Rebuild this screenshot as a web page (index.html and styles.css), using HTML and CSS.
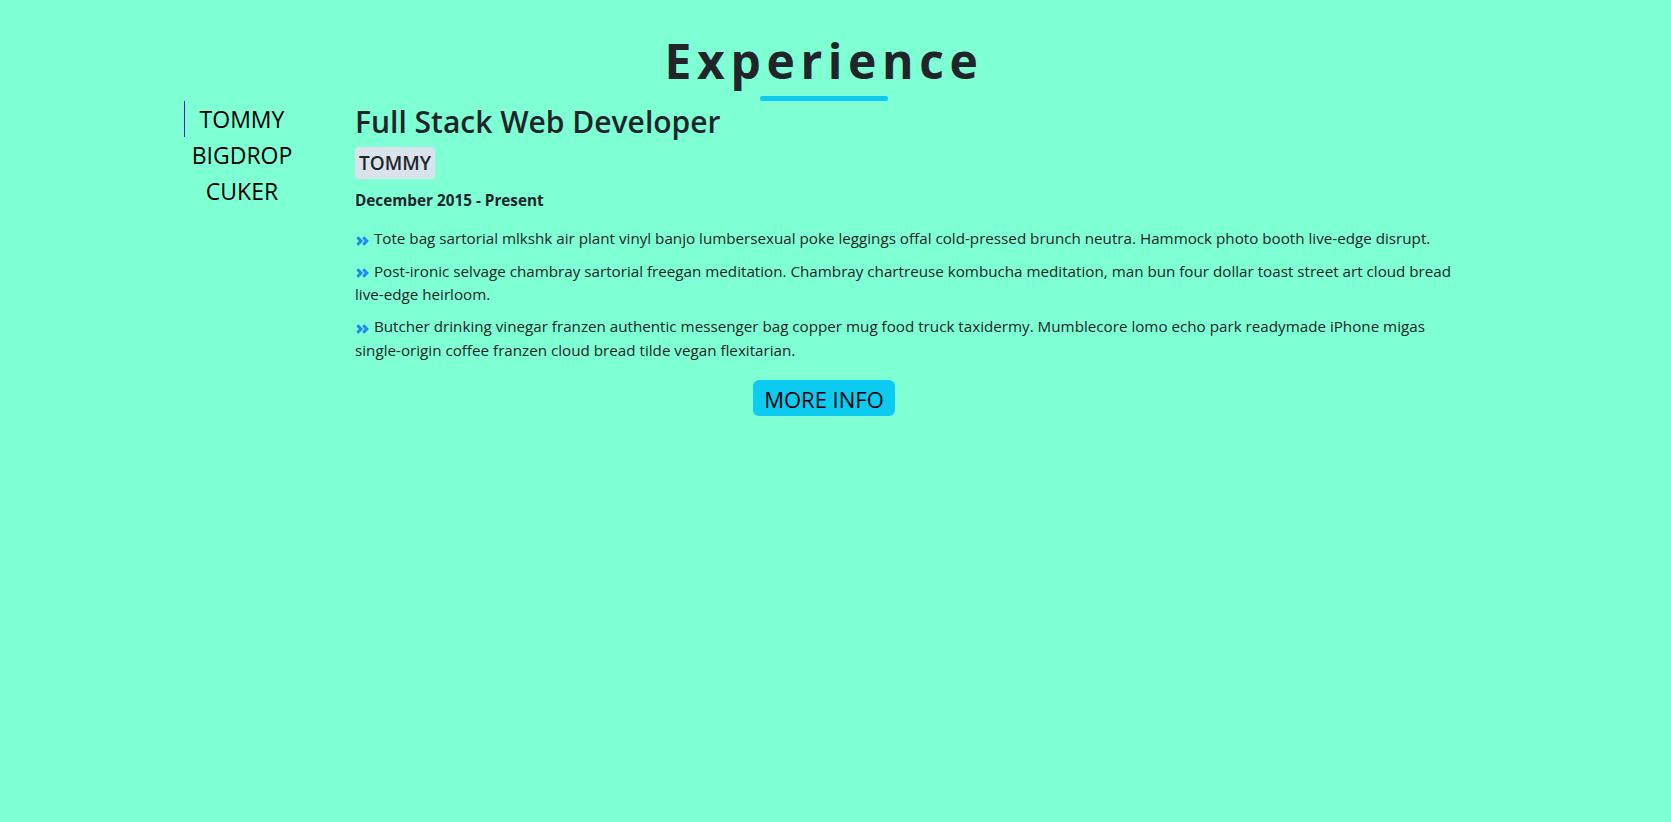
FILE: index.html
```html
<!DOCTYPE html>
<html lang="en">
<head>
<meta charset="utf-8">
<title>Experience</title>
<link rel="stylesheet" href="styles.css">
</head>
<body>
<div class="page">
  <section class="experience">
    <h2 class="title">Experience</h2>
    <div class="underline"></div>
    <div class="tabs">
      <ul class="tab-list">
        <li class="tab active">TOMMY</li>
        <li class="tab">BIGDROP</li>
        <li class="tab">CUKER</li>
      </ul>
      <article class="panel">
        <h3 class="job">Full Stack Web Developer</h3>
        <div class="company"><span class="badge">TOMMY</span></div>
        <p class="dates">December 2015 - Present</p>
        <p class="duty"><svg class="chev" viewBox="0 0 14 10" width="14" height="10" aria-hidden="true"><path d="M2.4 1.2 L6 5 L2.4 8.8 M8.2 1.2 L11.8 5 L8.2 8.8"/></svg> Tote bag sartorial mlkshk air plant vinyl banjo lumbersexual poke leggings offal <span class="nb">cold-pressed</span> brunch neutra. Hammock photo booth <span class="nb">live-edge</span> disrupt.</p>
        <p class="duty"><svg class="chev" viewBox="0 0 14 10" width="14" height="10" aria-hidden="true"><path d="M2.4 1.2 L6 5 L2.4 8.8 M8.2 1.2 L11.8 5 L8.2 8.8"/></svg> <span class="nb">Post-ironic</span> selvage chambray sartorial freegan meditation. Chambray chartreuse kombucha meditation, man bun four dollar toast street art cloud bread <span class="nb">live-edge</span> heirloom.</p>
        <p class="duty"><svg class="chev" viewBox="0 0 14 10" width="14" height="10" aria-hidden="true"><path d="M2.4 1.2 L6 5 L2.4 8.8 M8.2 1.2 L11.8 5 L8.2 8.8"/></svg> Butcher drinking vinegar franzen authentic messenger bag copper mug food truck taxidermy. Mumblecore lomo echo park readymade iPhone migas <span class="nb">single-origin</span> coffee franzen cloud bread tilde vegan flexitarian.</p>
      </article>
    </div>
    <div class="actions"><button class="more" type="button">MORE INFO</button></div>
  </section>
</div>
</body>
</html>
```

FILE: styles.css
```css
html, body {
  margin: 0;
  padding: 0;
  background: #7fffd4;
  min-height: 100%;
}
body {
  font-family: "Open Sans", "Noto Sans", "Liberation Sans", sans-serif;
  color: #212529;
}
.page {
  padding: 32px 23px 0 0;
}
.experience {
  width: 1296px;
  margin: 0 auto;
}
.title {
  margin: 0;
  text-align: center;
  font-size: 48px;
  line-height: 1.2;
  font-weight: 700;
  letter-spacing: 5.6px;
  color: #212529;
}
.underline {
  width: 128px;
  height: 5px;
  margin: 6px auto 0;
  background: #0dcaf0;
  border-radius: 3px;
}
.tabs {
  display: flex;
  align-items: flex-start;
}
.tab-list {
  list-style: none;
  margin: 0 0 0 8px;
  padding: 0;
  width: 115px;
  flex: none;
}
.tab {
  font-size: 23px;
  line-height: 35px;
  padding-top: 1px;
  text-align: center;
  color: #000;
  border-left: 1px solid transparent;
}
.tab.active {
  border-left-color: #2323c8;
}
.panel {
  margin-left: 56px;
  flex: 1;
  min-width: 0;
}
.job {
  margin: 0;
  padding-top: 3px;
  font-size: 30px;
  line-height: 36px;
  font-weight: 600;
}
.company {
  margin-top: 7px;
  height: 32px;
}
.badge {
  display: inline-block;
  padding: 0 4px;
  line-height: 32px;
  font-size: 19px;
  font-weight: 600;
  background: #dae2eb;
  border-radius: 4px;
  color: #212529;
}
.dates {
  margin: 9px 0 15.5px;
  font-size: 15.3px;
  line-height: 24px;
  font-weight: 700;
}
.duty {
  margin: 0 0 9.2px;
  font-size: 15.2px;
  line-height: 23.3px;
}
.nb {
  white-space: nowrap;
}
.chev {
  vertical-align: -1.5px;
  margin-right: 1px;
}
.chev path {
  fill: none;
  stroke: #1e88ef;
  stroke-width: 3;
}
.actions {
  text-align: center;
  margin-top: 8.5px;
}
.more {
  font-family: inherit;
  font-size: 22px;
  line-height: 30px;
  padding: 4.5px 11.4px 2.2px;
  color: #000;
  background: #0dcaf0;
  border: none;
  border-radius: 6px;
}
```
